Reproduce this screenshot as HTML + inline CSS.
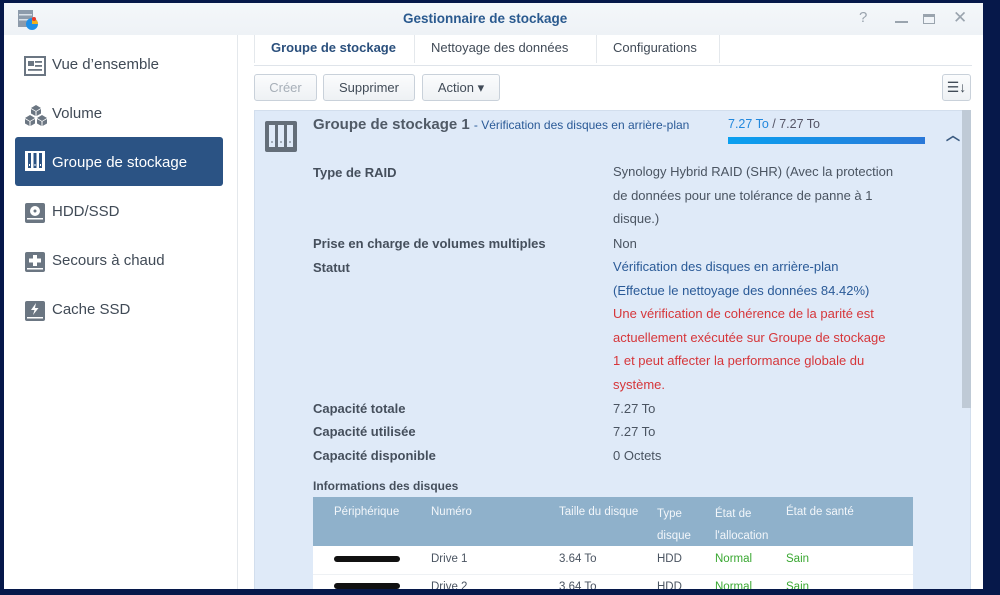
<!DOCTYPE html>
<html><head><meta charset="utf-8"><style>
*{margin:0;padding:0;box-sizing:border-box}
body{width:1000px;height:595px;background:#06184a;position:relative;overflow:hidden;font-family:"Liberation Sans",sans-serif;color:#3c4858}
.a{position:absolute;white-space:nowrap}
#win{position:absolute;left:4px;top:3px;width:979px;height:586px;background:#fff;overflow:hidden}
#title{position:absolute;left:0;top:0;width:979px;height:32px;background:linear-gradient(#f4f7fa,#eef2f6)}
.side{font-size:15px;color:#404a56}
.lbl{font-size:13px;font-weight:bold;color:#454f5c}
.val{font-size:13px;color:#4a5461}
.blue{color:#2a5a97}
.red{color:#d6363a}
.btn{position:absolute;top:71px;height:27px;border:1px solid #c9d1da;border-radius:3px;background:linear-gradient(#fbfcfd,#eef1f4);font-size:13px;color:#414b57;text-align:center;line-height:25px}
.th{font-size:11.5px;color:#f2f6fa}
.td{font-size:11.5px;color:#4a5461}
.g{color:#3aa832}
</style></head><body>
<div id="win">
<div id="title">
  <svg class="a" style="left:13px;top:6px" width="22" height="22" viewBox="0 0 22 22"><rect x="1" y="1" width="15" height="17" fill="#8d9bab"/><rect x="2" y="5" width="13" height="1.5" fill="#d9e0e8"/><rect x="2" y="10" width="13" height="1.5" fill="#d9e0e8"/><circle cx="15" cy="15" r="6" fill="#1f8fe6"/><path d="M15 15 L15 9 A6 6 0 0 1 21 15 Z" fill="#f2b21c"/><circle cx="17" cy="10" r="2" fill="#e63b2e"/></svg>
  <div class="a" style="left:399px;top:8px;font-size:13.5px;font-weight:bold;color:#2a5a8f">Gestionnaire de stockage</div>
  <div class="a" style="left:855px;top:6px;font-size:15px;color:#9aa4ae">?</div>
  <div class="a" style="left:891px;top:18px;width:13px;height:2px;background:#9aa4ae"></div>
  <div class="a" style="left:919px;top:11px;width:12px;height:10px;border:1.5px solid #9aa4ae;border-top-width:3px"></div>
  <div class="a" style="left:949px;top:5px;font-size:17px;color:#9aa4ae">✕</div>
</div>
<div class="a" style="left:233px;top:32px;width:1px;height:560px;background:#e4e8ec"></div>
<svg class="a" style="left:20px;top:53px" width="22" height="20"><rect x="1" y="1" width="20" height="18" fill="none" stroke="#6b7682" stroke-width="2"/><rect x="4" y="5" width="6" height="5" fill="#6b7682"/><rect x="11" y="5" width="7" height="1.8" fill="#6b7682"/><rect x="11" y="9" width="7" height="1.8" fill="#6b7682"/><rect x="4" y="13" width="14" height="1.8" fill="#6b7682"/></svg>
<div class="a side" style="left:48px;top:53px">Vue d’ensemble</div>
<svg class="a" style="left:20px;top:101px" width="24" height="24" viewBox="0 0 24 24" fill="#6b7682"><path d="M12 1 L17 4 L12 7 L7 4Z M7 5 L11.5 7.5 L11.5 12 L7 9.5Z M17 5 L12.5 7.5 L12.5 12 L17 9.5Z M6 11 L11 14 L6 17 L1 14Z M1 15 L5.5 17.5 L5.5 22 L1 19.5Z M11 15 L6.5 17.5 L6.5 22 L11 19.5Z M18 11 L23 14 L18 17 L13 14Z M13 15 L17.5 17.5 L17.5 22 L13 19.5Z M23 15 L18.5 17.5 L18.5 22 L23 19.5Z"/></svg>
<div class="a side" style="left:48px;top:102px">Volume</div>
<div class="a" style="left:11px;top:134px;width:208px;height:49px;background:#2b5384;border-radius:3px"></div>
<svg class="a" style="left:20px;top:147px" width="22" height="22"><rect x="1" y="1" width="20" height="20" fill="#fff"/><rect x="4" y="3" width="3" height="15" fill="#2b5384"/><rect x="9.5" y="3" width="3" height="15" fill="#2b5384"/><rect x="15" y="3" width="3" height="15" fill="#2b5384"/><rect x="5" y="14" width="1" height="2" fill="#fff"/><rect x="10.5" y="14" width="1" height="2" fill="#fff"/><rect x="16" y="14" width="1" height="2" fill="#fff"/></svg>
<div class="a side" style="left:48px;top:151px;color:#fff">Groupe de stockage</div>
<svg class="a" style="left:20px;top:199px" width="22" height="22"><rect x="1" y="1" width="20" height="20" rx="2" fill="#6b7682"/><circle cx="11" cy="9" r="5" fill="#fff"/><circle cx="11" cy="9" r="1.5" fill="#6b7682"/><rect x="3" y="16" width="16" height="1.5" fill="#fff"/></svg>
<div class="a side" style="left:48px;top:200px">HDD/SSD</div>
<svg class="a" style="left:20px;top:248px" width="22" height="22"><rect x="1" y="1" width="20" height="20" rx="2" fill="#6b7682"/><rect x="9" y="4" width="4" height="11" fill="#fff"/><rect x="5" y="7.5" width="12" height="4" fill="#fff"/><rect x="3" y="17" width="16" height="1.5" fill="#fff"/></svg>
<div class="a side" style="left:48px;top:249px">Secours à chaud</div>
<svg class="a" style="left:20px;top:297px" width="22" height="22"><rect x="1" y="1" width="20" height="20" rx="2" fill="#6b7682"/><path d="M12 3 L7 10 L10.5 10 L9 15 L14.5 8 L11 8 Z" fill="#fff"/><rect x="3" y="17" width="16" height="1.5" fill="#fff"/></svg>
<div class="a side" style="left:48px;top:298px">Cache SSD</div>
<div class="a" style="left:250px;top:32px;width:1px;height:28px;background:#e4e8ec"></div>
<div class="a" style="left:410px;top:32px;width:1px;height:28px;background:#e4e8ec"></div>
<div class="a" style="left:592px;top:32px;width:1px;height:28px;background:#e4e8ec"></div>
<div class="a" style="left:715px;top:32px;width:1px;height:28px;background:#e4e8ec"></div>
<div class="a" style="left:250px;top:62px;width:718px;height:1px;background:#dfe4ea"></div>
<div class="a" style="left:267px;top:37px;font-size:13px;font-weight:bold;color:#2a4f7c">Groupe de stockage</div>
<div class="a" style="left:427px;top:37px;font-size:13px;color:#414b57">Nettoyage des données</div>
<div class="a" style="left:609px;top:37px;font-size:13px;color:#414b57">Configurations</div>
<div class="btn" style="left:250px;width:63px;color:#a7afb8">Créer</div>
<div class="btn" style="left:319px;width:92px">Supprimer</div>
<div class="btn" style="left:418px;width:78px">Action ▾</div>
<div class="btn" style="left:938px;width:29px;font-size:14px">☰↓</div>
<div class="a" style="left:250px;top:107px;width:717px;height:490px;background:#dfeaf8;border:1px solid #d2deed"></div>
<div class="a" style="left:958px;top:107px;width:9px;height:298px;background:#bfcad6"></div>
<svg class="a" style="left:261px;top:118px" width="32" height="31"><rect x="0" y="0" width="32" height="31" rx="2" fill="#646e79"/><rect x="4" y="4" width="6" height="22" fill="#dfeaf8"/><rect x="13" y="4" width="6" height="22" fill="#dfeaf8"/><rect x="22" y="4" width="6" height="22" fill="#dfeaf8"/><rect x="6.5" y="20" width="1" height="2" fill="#646e79"/><rect x="15.5" y="20" width="1" height="2" fill="#646e79"/><rect x="24.5" y="20" width="1" height="2" fill="#646e79"/></svg>
<div class="a" style="left:309px;top:113px;font-size:15px;font-weight:bold;color:#505a66">Groupe de stockage 1 <span style="font-size:12px;font-weight:normal;color:#2a5a97">- Vérification des disques en arrière-plan</span></div>
<div class="a" style="left:724px;top:114px;font-size:12.5px;color:#556"><span style="color:#2288dd">7.27 To</span> / 7.27 To</div>
<div class="a" style="left:724px;top:134px;width:197px;height:7px;background:linear-gradient(90deg,#0aa0f0,#2a78d8)"></div>
<div class="a" style="left:942px;top:122px;font-size:14px;color:#3a5a80;font-weight:bold">︿</div>
<div class="a lbl" style="left:309px;top:162px">Type de RAID</div>
<div class="a val" style="left:609px;top:157px;line-height:23.5px">Synology Hybrid RAID (SHR) (Avec la protection<br>de données pour une tolérance de panne à 1<br>disque.)</div>
<div class="a lbl" style="left:309px;top:233px">Prise en charge de volumes multiples</div>
<div class="a val" style="left:609px;top:233px">Non</div>
<div class="a lbl" style="left:309px;top:257px">Statut</div>
<div class="a val" style="left:609px;top:252px;line-height:23.5px"><span class="blue">Vérification des disques en arrière-plan<br>(Effectue le nettoyage des données 84.42%)</span><br><span class="red">Une vérification de cohérence de la parité est<br>actuellement exécutée sur Groupe de stockage<br>1 et peut affecter la performance globale du<br>système.</span></div>
<div class="a lbl" style="left:309px;top:398px">Capacité totale</div>
<div class="a val" style="left:609px;top:398px">7.27 To</div>
<div class="a lbl" style="left:309px;top:421px">Capacité utilisée</div>
<div class="a val" style="left:609px;top:421px">7.27 To</div>
<div class="a lbl" style="left:309px;top:445px">Capacité disponible</div>
<div class="a val" style="left:609px;top:445px">0 Octets</div>
<div class="a lbl" style="left:309px;top:476px;font-size:12px">Informations des disques</div>
<div class="a" style="left:309px;top:494px;width:600px;height:49px;background:#8fb1cb"></div>
<div class="a" style="left:309px;top:543px;width:600px;height:50px;background:#fff"></div>
<div class="a" style="left:309px;top:571px;width:600px;height:1px;background:#eef1f4"></div>
<div class="a th" style="left:330px;top:503px">Périphérique</div>
<div class="a th" style="left:427px;top:503px">Numéro</div>
<div class="a th" style="left:555px;top:503px">Taille du disque</div>
<div class="a th" style="left:653px;top:500px;line-height:22px">Type<br>disque</div>
<div class="a th" style="left:711px;top:500px;line-height:22px">État de<br>l'allocation</div>
<div class="a th" style="left:782px;top:503px">État de santé</div>
<div class="a" style="left:330px;top:553px;width:66px;height:6px;background:#111;border-radius:3px"></div>
<div class="a td" style="left:427px;top:550px">Drive 1</div>
<div class="a td" style="left:555px;top:550px">3.64 To</div>
<div class="a td" style="left:653px;top:550px">HDD</div>
<div class="a td g" style="left:711px;top:550px">Normal</div>
<div class="a td g" style="left:782px;top:550px">Sain</div>
<div class="a" style="left:330px;top:580px;width:66px;height:6px;background:#111;border-radius:3px"></div>
<div class="a td" style="left:427px;top:578px">Drive 2</div>
<div class="a td" style="left:555px;top:578px">3.64 To</div>
<div class="a td" style="left:653px;top:578px">HDD</div>
<div class="a td g" style="left:711px;top:578px">Normal</div>
<div class="a td g" style="left:782px;top:578px">Sain</div>
</div>
</body></html>
